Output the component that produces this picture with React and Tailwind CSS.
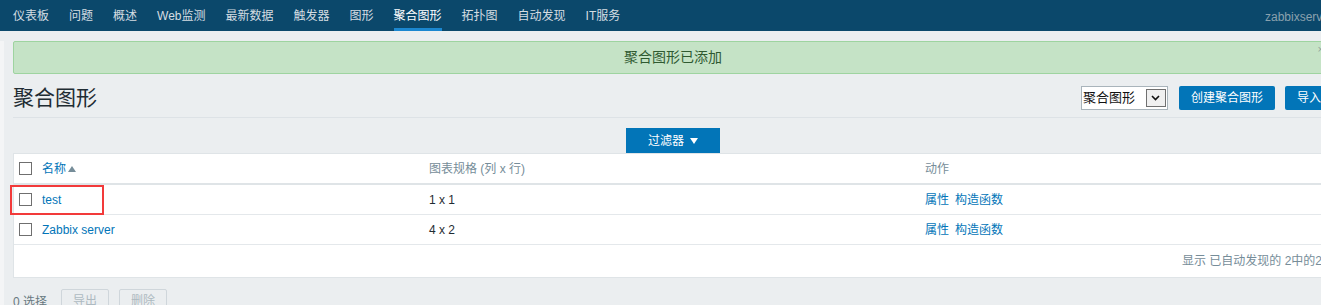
import React from "react";

const font = { fontFamily: '"Liberation Sans", Arial, "Noto Sans CJK SC", sans-serif' };

const navItems = ["仪表板", "问题", "概述", "Web监测", "最新数据", "触发器", "图形", "聚合图形", "拓扑图", "自动发现", "IT服务"];

const Checkbox = () => (
  <span className="inline-block w-[13px] h-[13px] border border-[#6f6f6f] bg-white shrink-0" />
);

const rows = [
  { name: "test", size: "1 x 1", marked: true },
  { name: "Zabbix server", size: "4 x 2" },
];

export default function App() {
  return (
    <div className="w-[1321px] h-[305px] overflow-hidden bg-[#ebeef0] text-[12px] text-[#1f2c33]" style={font}>
      <div className="w-[1346px]">
        {/* top menu */}
        <div className="h-[31px] bg-[#0b486b] flex items-stretch pl-[3px]">
          {navItems.map((item) => (
            <div key={item} className="px-[10px] flex">
              <span
                className={
                  item === "聚合图形"
                    ? "flex items-center pt-[3px] border-b-[3px] border-[#1b87d0] text-white"
                    : "flex items-center pt-[3px] border-b-[3px] border-transparent text-[#d5dde2]"
                }
              >
                {item}
              </span>
            </div>
          ))}
          <div className="ml-auto w-[81px] flex items-center text-[#8aa1ae] pt-[2px] whitespace-nowrap">zabbixserver</div>
        </div>

        <div className="border-l-[4px] border-[#f4f5f6] pl-[9px] pr-[13px]">
          {/* message */}
          <div className="relative mt-[10px] h-[33px] bg-[#c5e3c6] border border-[#9ed4a0] rounded-[2px] flex items-center justify-center text-[14px] text-[#2f5a31]">
            聚合图形已添加
            <span className="absolute right-[8px] top-[2px] text-[11px] text-[#8fa39a] leading-none">×</span>
          </div>

          {/* header */}
          <div className="flex items-center mt-[12px] pb-[7px] border-b border-[#dde2e6]">
            <h1 className="text-[21px] leading-[24px] text-[#1f2c33] font-normal">聚合图形</h1>
            <div className="ml-auto flex items-center">
              <div className="w-[87px] h-[24px] bg-white border border-[#a9b4bb] flex items-center pl-[1px] pr-[1px]">
                <span className="flex-1 text-[13px] text-[#111]">聚合图形</span>
                <span className="w-[20px] h-[18px] border border-[#707070] bg-[#f0f0f0] flex items-center justify-center">
                  <svg width="9" height="6" viewBox="0 0 9 6">
                    <path d="M1 1 L4.5 4.5 L8 1" fill="none" stroke="#111" strokeWidth="1.6" />
                  </svg>
                </span>
              </div>
              <button className="ml-[11px] h-[24px] px-[12px] bg-[#0275b8] text-white rounded-[2px]">创建聚合图形</button>
              <button className="ml-[10px] h-[24px] px-[12px] bg-[#0275b8] text-white rounded-[2px]">导入</button>
            </div>
          </div>

          {/* filter tab */}
          <div className="flex justify-center mt-[10px]">
            <div className="w-[94px] h-[25px] bg-[#0275b8] text-white flex items-center justify-center gap-[6px]">
              过滤器
              <svg width="8" height="6" viewBox="0 0 8 6">
                <path d="M0 0 H8 L4 6 Z" fill="#fff" />
              </svg>
            </div>
          </div>

          {/* table */}
          <div className="bg-white border border-[#dfe4e7]">
            <div className="flex items-center h-[31px] border-b-[2px] border-[#dfe4e7] text-[#768d99]">
              <div className="w-[415px] pl-[5px] flex items-center gap-[10px]">
                <Checkbox />
                <span className="text-[#0275b8] flex items-center gap-[2px]">
                  名称
                  <svg width="8" height="6" viewBox="0 0 8 6">
                    <path d="M0 6 H8 L4 0 Z" fill="#768d99" />
                  </svg>
                </span>
              </div>
              <div className="w-[496px]">图表规格 (列 x 行)</div>
              <div className="flex-1">动作</div>
            </div>
            {rows.map((r) => (
              <div key={r.name} className="relative flex items-center h-[30px] border-b border-[#e4e8eb]">
                <div className="w-[415px] pl-[5px] flex items-center gap-[10px]">
                  <Checkbox />
                  <span className="text-[#0275b8]">{r.name}</span>
                </div>
                <div className="w-[496px]">{r.size}</div>
                <div className="flex-1 flex gap-[6px] text-[#0275b8]">
                  <span>属性</span>
                  <span>构造函数</span>
                </div>
                {r.marked && (
                  <div className="absolute left-[-4px] top-0 w-[94px] h-[30px] border-[2px] border-[#f23a3a]" />
                )}
              </div>
            ))}
            <div className="h-[32px] flex items-center justify-end pr-[10px] text-[#768d99]">显示 已自动发现的 2中的2</div>
          </div>

          {/* footer actions */}
          <div className="flex items-start mt-[11px] text-[#687980]">
            <span className="w-[48px] pt-[4px] leading-[18px] whitespace-nowrap">0 选择</span>
            <button className="h-[24px] w-[48px] border border-[#cfd6db] rounded-[2px] text-[#aebac1] mr-[10px]">导出</button>
            <button className="h-[24px] w-[48px] border border-[#cfd6db] rounded-[2px] text-[#aebac1]">删除</button>
          </div>
        </div>
      </div>
    </div>
  );
}
